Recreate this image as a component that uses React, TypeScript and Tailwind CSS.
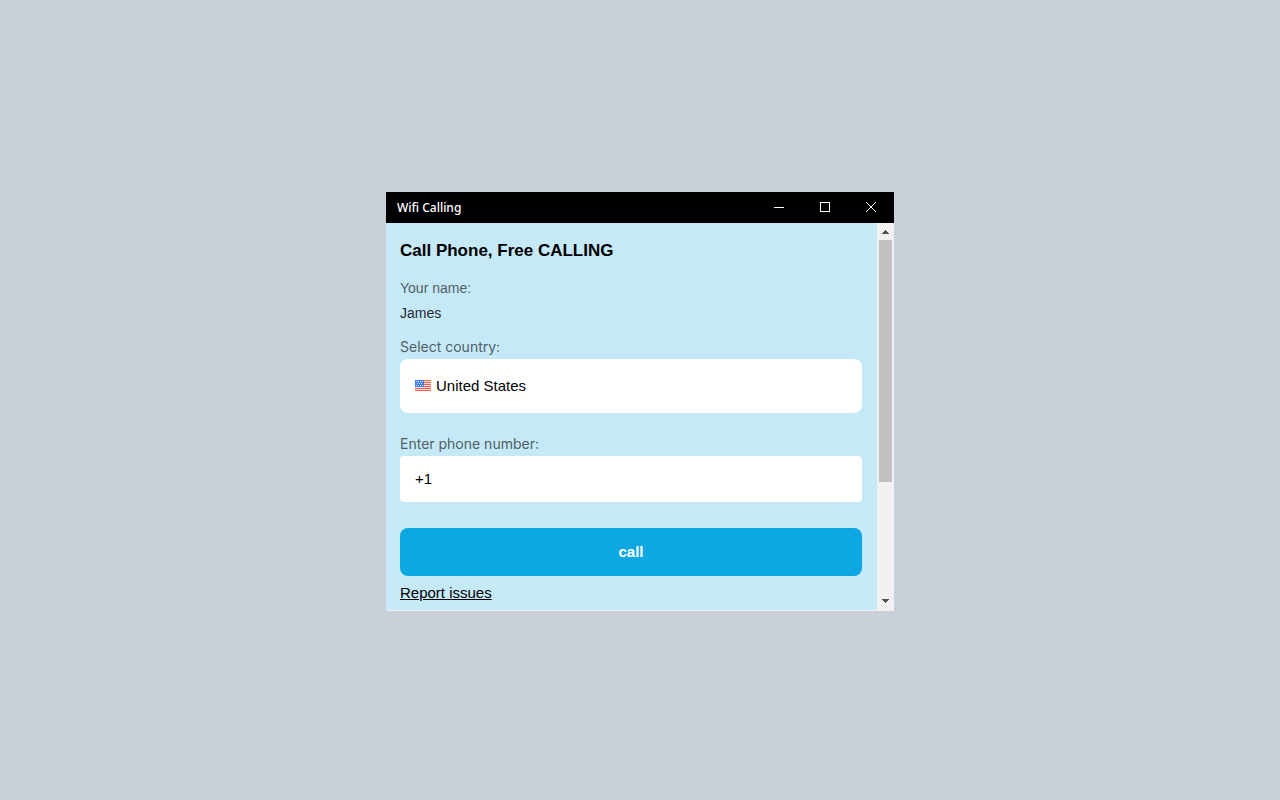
import { useState } from 'react';

const labelClass =
  "block font-['Inter','Open_Sans',sans-serif] text-sm leading-5 text-[#4f5f66]";

function TitleBar() {
  return (
    <header className="flex h-[31px] items-center justify-between bg-black pb-px text-white">
      <h1 className="pt-[2px] pl-[11px] font-['Noto_Sans','Open_Sans',sans-serif] text-xs leading-4 font-medium">
        Wifi Calling
      </h1>
      <div className="flex h-full">
        <button type="button" aria-label="Minimize" className="flex w-[46px] items-center justify-center">
          <svg width="10" height="10" viewBox="0 0 10 10" shapeRendering="crispEdges">
            <path d="M0 5h10v1H0z" fill="currentColor" />
          </svg>
        </button>
        <button type="button" aria-label="Maximize" className="flex w-[46px] items-center justify-center">
          <svg width="10" height="10" viewBox="0 0 10 10" fill="none" stroke="currentColor">
            <rect x="0.5" y="0.5" width="9" height="9" />
          </svg>
        </button>
        <button type="button" aria-label="Close" className="flex w-[46px] items-center justify-center">
          <svg width="10" height="10" viewBox="0 0 10 10" fill="none" stroke="currentColor">
            <path d="M0 0l10 10M10 0L0 10" />
          </svg>
        </button>
      </div>
    </header>
  );
}

function FlagUS() {
  return (
    <svg width="16" height="12" viewBox="0 0 16 12" shapeRendering="crispEdges" className="shrink-0" aria-hidden="true">
      <rect width="16" height="11" fill="#fbdcda" />
      <path
        d="M0 .5h16M0 2.5h16M0 4.5h16M0 6.5h16M0 8.5h16M0 10.5h16"
        stroke="#f0604c"
      />
      <rect width="9" height="7" fill="#3f7cf0" />
      <path
        d="M1 1.5h1M3 1.5h1M5 1.5h1M7 1.5h1M2 3.5h1M4 3.5h1M6 3.5h1M1 5.5h1M3 5.5h1M5 5.5h1M7 5.5h1"
        stroke="#d6e4ff"
      />
    </svg>
  );
}

function ScrollBar() {
  return (
    <div className="flex w-[17px] shrink-0 flex-col items-center bg-[#f1f1f1]">
      <button type="button" aria-label="Scroll up" className="flex h-[17px] w-full items-center justify-center pt-px">
        <svg width="7" height="4" viewBox="0 0 7 4" shapeRendering="crispEdges" fill="#505050">
          <path d="M3 0h1v1h1v1h1v1h1v1H0V3h1V2h1V1h1z" />
        </svg>
      </button>
      <div className="flex w-full grow flex-col items-center">
        <div className="h-[242px] w-[13px] bg-[#c1c1c1]" />
      </div>
      <button type="button" aria-label="Scroll down" className="flex h-[17px] w-full items-center justify-center pb-px">
        <svg width="7" height="4" viewBox="0 0 7 4" shapeRendering="crispEdges" fill="#505050">
          <path d="M0 0h7v1H6v1H5v1H4v1H3V3H2V2H1V1H0z" />
        </svg>
      </button>
    </div>
  );
}

function CallForm() {
  const [name, setName] = useState('James');
  const [country, setCountry] = useState('US');
  const [phone, setPhone] = useState('+1');

  return (
    <form
      className="min-w-0 grow bg-[#c6e9f8] pt-4 pr-[15px] pb-[7px] pl-[14px]"
      onSubmit={(e) => e.preventDefault()}
    >
      <h2 className="text-[17px] leading-6 font-bold text-black">Call Phone, Free CALLING</h2>

      <label htmlFor="name" className="mt-[15px] block text-sm leading-5 text-[#4f5f66]">
        Your name:
      </label>
      <input
        id="name"
        value={name}
        onChange={(e) => setName(e.target.value)}
        className="mt-[5px] block h-5 w-full bg-transparent text-sm leading-5 text-[#1f2a30] outline-none"
      />

      <label htmlFor="country" className={`mt-[14px] ${labelClass}`}>
        Select country:
      </label>
      <div className="mt-[2px] flex h-[54px] items-center gap-[5px] rounded-lg bg-white px-[15px]">
        <FlagUS />
        <select
          id="country"
          value={country}
          onChange={(e) => setCountry(e.target.value)}
          className="h-full min-w-0 grow appearance-none bg-transparent text-[15px] text-black outline-none"
        >
          <option value="US">United States</option>
        </select>
      </div>

      <label htmlFor="phone" className={`mt-[21px] ${labelClass}`}>
        Enter phone number:
      </label>
      <input
        id="phone"
        type="tel"
        value={phone}
        onChange={(e) => setPhone(e.target.value)}
        className="mt-[2px] block h-[46px] w-full rounded bg-white px-[15px] pb-[2px] text-[15px] text-black outline-none"
      />

      <button
        type="submit"
        className="mt-[26px] block h-12 w-full rounded-lg bg-[#0da7e2] text-[15px] font-bold text-white"
      >
        call
      </button>
      <a href="#report" className="mt-[7px] block w-fit text-[15px] leading-5 text-black underline">
        Report issues
      </a>
    </form>
  );
}

export default function App() {
  return (
    <main className="flex min-h-screen items-center justify-center bg-[#c9d0d8] pt-[3px] font-['Liberation_Sans',Arial,sans-serif]">
      <section className="w-full max-w-[508px] border-b border-[#f1f1f1]">
        <TitleBar />
        <div className="flex">
          <CallForm />
          <ScrollBar />
        </div>
      </section>
    </main>
  );
}
